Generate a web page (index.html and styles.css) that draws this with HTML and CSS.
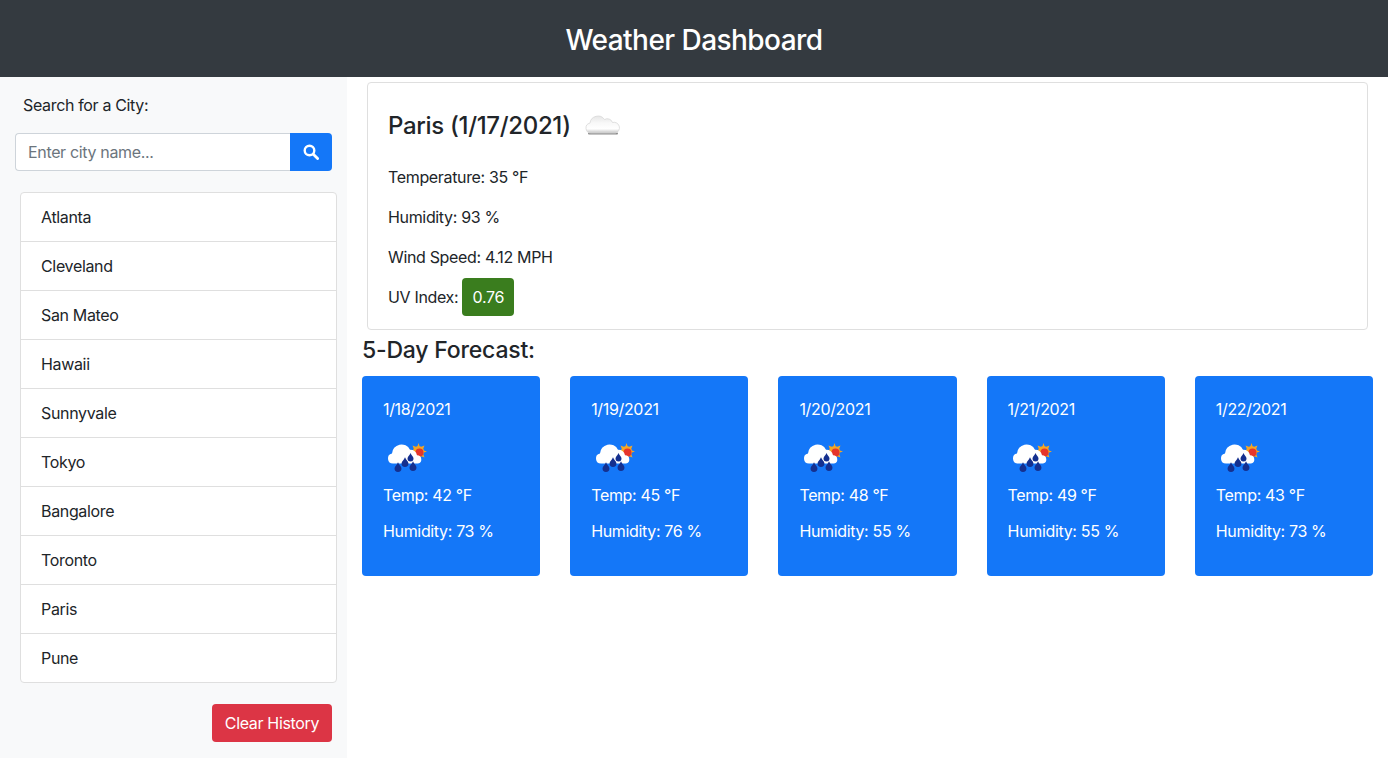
FILE: index.html
```html
<!DOCTYPE html>
<html>
  <head>
    <title>Weather Dashboard</title>
    <meta charset="utf-8">
    <link rel="stylesheet" href="styles.css">
  </head>
  <body>
    <svg class="defs" width="0" height="0">
      <defs>
        <linearGradient id="cloudfill" x1="0" y1="0" x2="0" y2="1">
          <stop offset="0" stop-color="#e6e6e6"/>
          <stop offset=".4" stop-color="#f8f8f8"/>
          <stop offset=".75" stop-color="#ffffff"/>
          <stop offset="1" stop-color="#c4c4c4"/>
        </linearGradient>
        <symbol id="rain" viewBox="0 0 50 50">
          <path fill="#f6a623" d="M35.500 12l1.500 4.500h-3zM35.500 29l1.500-4.500h-3zM44 20.500l-4.500 1.500v-3zM27 20.500l4.500 1.500v-3zM41.500 14.500l-1.800 4.500-2.700-2.700zM41.500 26.500l-1.800-4.500-2.700 2.700zM29.500 14.500l4.500 1.800-2.700 2.700z"/>
          <circle cx="35.500" cy="20.500" r="5.500" fill="#f6a623"/>
          <circle cx="36.500" cy="21.500" r="4" fill="#e5352b"/>
          <path fill="#fff" d="M10 32.500a5 5 0 0 1-1-9.900 9.500 9.500 0 0 1 18-3.900 7 7 0 0 1 7 5.500 4.200 4.200 0 0 1 1 8.300z"/>
          <g fill="#15308f">
            <path transform="translate(15 37) scale(1.150)" d="M0-5c1 2.500 3 3.500 3 5.500a3 3 0 0 1-6 0c0-2 2-3 3-5.500z"/>
            <path transform="translate(22 32) scale(1.150)" d="M0-5c1 2.500 3 3.500 3 5.500a3 3 0 0 1-6 0c0-2 2-3 3-5.500z"/>
            <path transform="translate(30 36) scale(1.150)" d="M0-5c1 2.500 3 3.500 3 5.500a3 3 0 0 1-6 0c0-2 2-3 3-5.500z"/>
            <path transform="translate(27.500 27)" d="M0-5c1 2.500 3 3.500 3 5.500a3 3 0 0 1-6 0c0-2 2-3 3-5.500z"/>
          </g>
        </symbol>
      </defs>
    </svg>

    <header class="topbar">
      <h1>Weather Dashboard</h1>
    </header>

    <div class="page">
      <aside class="sidebar">
        <label class="search-label" for="city">Search for a City:</label>
        <div class="search">
          <input id="city" type="text" placeholder="Enter city name...">
          <button class="search-btn" type="button" aria-label="Search">
            <svg width="16" height="16" viewBox="0 0 16 16">
              <circle cx="6.500" cy="6.500" r="4.800" fill="none" stroke="#fff" stroke-width="2.400"/>
              <path d="M10.300 10.300L14.600 14.600" stroke="#fff" stroke-width="2.800" stroke-linecap="round"/>
            </svg>
          </button>
        </div>
        <ul class="history">
          <li>Atlanta</li>
          <li>Cleveland</li>
          <li>San Mateo</li>
          <li>Hawaii</li>
          <li>Sunnyvale</li>
          <li>Tokyo</li>
          <li>Bangalore</li>
          <li>Toronto</li>
          <li>Paris</li>
          <li>Pune</li>
        </ul>
        <div class="clear-row">
          <button class="clear-btn" type="button">Clear History</button>
        </div>
      </aside>

      <main class="main">
        <section class="current">
          <div class="current-title">
            <h2>Paris (1/17/2021)</h2>
            <svg class="cloud" width="36" height="24" viewBox="0 0 36 24">
              <path d="M4 20.600h28" stroke="#666" stroke-width="2" stroke-linecap="round" opacity=".75"/>
              <path d="M6 20a5 5 0 0 1-1-9.900 8 8 0 0 1 14.500-3.600 5.500 5.500 0 0 1 8 3 5 5 0 0 1 3 10.500z" fill="url(#cloudfill)" stroke="#d8d8d8" stroke-width=".8"/>
            </svg>
          </div>
          <p>Temperature: 35 °F</p>
          <p>Humidity: 93 %</p>
          <p>Wind Speed: 4.12 MPH</p>
          <p class="uv">UV Index: <span class="uv-badge">0.76</span></p>
        </section>

        <h3 class="forecast-title">5-Day Forecast:</h3>
        <div class="forecast">
          <div class="day">
            <p class="day-date">1/18/2021</p>
            <svg class="day-icon" width="50" height="50"><use href="#rain"/></svg>
            <p class="day-temp">Temp: 42 °F</p>
            <p>Humidity: 73 %</p>
          </div>
          <div class="day">
            <p class="day-date">1/19/2021</p>
            <svg class="day-icon" width="50" height="50"><use href="#rain"/></svg>
            <p class="day-temp">Temp: 45 °F</p>
            <p>Humidity: 76 %</p>
          </div>
          <div class="day">
            <p class="day-date">1/20/2021</p>
            <svg class="day-icon" width="50" height="50"><use href="#rain"/></svg>
            <p class="day-temp">Temp: 48 °F</p>
            <p>Humidity: 55 %</p>
          </div>
          <div class="day">
            <p class="day-date">1/21/2021</p>
            <svg class="day-icon" width="50" height="50"><use href="#rain"/></svg>
            <p class="day-temp">Temp: 49 °F</p>
            <p>Humidity: 55 %</p>
          </div>
          <div class="day">
            <p class="day-date">1/22/2021</p>
            <svg class="day-icon" width="50" height="50"><use href="#rain"/></svg>
            <p class="day-temp">Temp: 43 °F</p>
            <p>Humidity: 73 %</p>
          </div>
        </div>
      </main>
    </div>
  </body>
</html>
```

FILE: styles.css
```css
* {
  box-sizing: border-box;
}

body {
  margin: 0;
  font-family: "Inter", "Liberation Sans", sans-serif;
  font-size: 16px;
  line-height: 24px;
  letter-spacing: -0.34px;
  color: #212529;
  background-color: white;
}

p {
  margin: 0;
}

.defs {
  position: absolute;
}

.topbar {
  height: 77px;
  display: flex;
  align-items: center;
  justify-content: center;
  padding-top: 2px;
  background-color: #343a40;
  color: white;
}

.topbar h1 {
  margin: 0;
  font-size: 28px;
  line-height: 34px;
  font-weight: 500;
  letter-spacing: -0.55px;
}

.page {
  display: flex;
  height: 681px;
}

.sidebar {
  width: 347px;
  flex: none;
  padding: 16px 15px 0;
  background-color: #f8f9fa;
}

.search-label {
  display: block;
  padding-left: 8px;
  margin-bottom: 16px;
}

.search {
  display: flex;
  width: 317px;
  height: 38px;
}

.search input {
  flex: 1;
  min-width: 0;
  padding: 0 12px;
  font: inherit;
  letter-spacing: inherit;
  color: #212529;
  background-color: white;
  border: 1px solid #ced4da;
  border-right: 0;
  border-radius: 4px 0 0 4px;
}

.search input::placeholder {
  color: #6c757d;
  opacity: 1;
}

.search-btn {
  width: 42px;
  display: flex;
  align-items: center;
  justify-content: center;
  padding: 0;
  border: 0;
  border-radius: 0 4px 4px 0;
  background-color: #1477f8;
}

.history {
  list-style: none;
  margin: 21px 0 0 5px;
  padding: 0;
  width: 317px;
  background-color: white;
  border: 1px solid #dfdfdf;
  border-radius: 4px;
}

.history li {
  height: 49px;
  padding: 12px 20px;
  border-bottom: 1px solid #dfdfdf;
}

.history li:last-child {
  height: 48px;
  border-bottom: 0;
}

.clear-row {
  display: flex;
  justify-content: flex-end;
  margin-top: 21px;
}

.clear-btn {
  height: 38px;
  width: 120px;
  padding: 0;
  font: inherit;
  letter-spacing: inherit;
  color: white;
  border: 0;
  border-radius: 4px;
  background-color: #dc3545;
}

.main {
  flex: 1;
  min-width: 0;
  padding: 5px 15px 0 15px;
}

.current {
  margin: 0 5px;
  height: 248px;
  padding: 20px;
  border: 1px solid #dfdfdf;
  border-radius: 4px;
}

.current-title {
  display: flex;
  align-items: center;
  gap: 14px;
  height: 44px;
  margin-bottom: 10px;
}

.current-title h2 {
  margin: 0;
  font-size: 24px;
  line-height: 29px;
  font-weight: 500;
  letter-spacing: -0.32px;
}

.current p {
  height: 40px;
  display: flex;
  align-items: center;
}

.current p.uv {
  gap: 4px;
}

.uv-badge {
  height: 38px;
  width: 52px;
  display: flex;
  align-items: center;
  justify-content: center;
  color: white;
  background-color: #3a7d1e;
  border-radius: 4px;
}

.forecast-title {
  margin: 6px 0 11px;
  font-size: 23px;
  line-height: 29px;
  font-weight: 500;
  letter-spacing: -0.2px;
}

.forecast {
  display: grid;
  grid-template-columns: repeat(5, 1fr);
  gap: 30px;
}

.day {
  height: 200px;
  padding: 21px;
  color: white;
  background-color: #1477f8;
  border-radius: 4px;
}

.day-date {
  margin-bottom: 10px;
}

.day-icon {
  display: block;
  margin-bottom: 2px;
}

.day-temp {
  margin-bottom: 12px;
}
```
